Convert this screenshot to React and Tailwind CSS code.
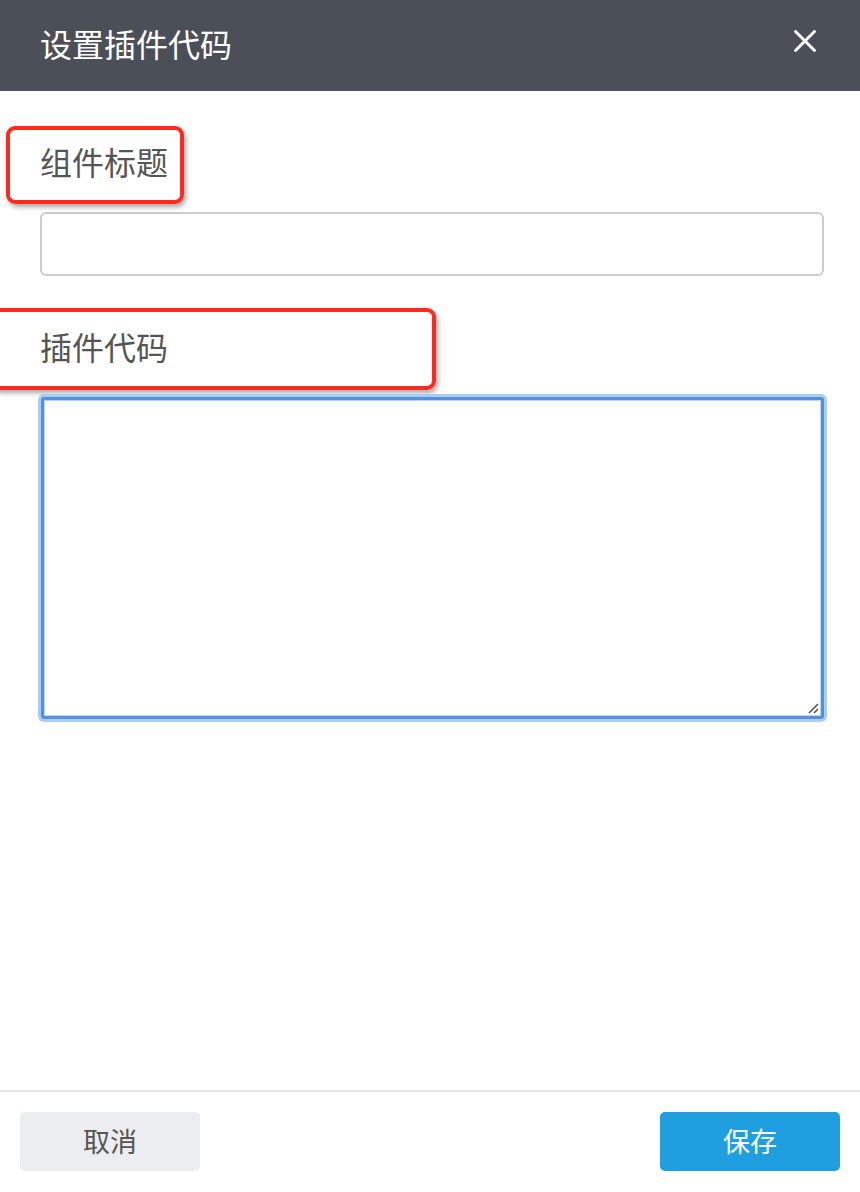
import React from "react";

export default function App() {
  const font = { fontFamily: '"Noto Sans CJK SC", "Noto Sans", sans-serif' };
  return (
    <div className="relative w-[860px] h-[1192px] bg-white flex flex-col overflow-hidden" style={font}>
      {/* Header */}
      <div className="h-[91px] bg-[#4b5058] flex items-center justify-between pl-[40px] pr-[43px] shrink-0">
        <span className="text-white text-[32px] leading-none mt-[-6px]">设置插件代码</span>
        <svg width="24" height="24" viewBox="0 0 24 24" className="mt-[-9px]">
          <path d="M2.5 2.5 L21.5 21.5 M21.5 2.5 L2.5 21.5" stroke="#ffffff" strokeWidth="3" strokeLinecap="round" />
        </svg>
      </div>

      {/* Body */}
      <div className="flex-1 flex flex-col px-[40px] pt-[46px]">
        <div className="relative">
          <div className="text-[32px] leading-[48px] text-[#555555]">组件标题</div>
          <div className="absolute left-[-34px] top-[-11px] w-[178px] h-[78px] border-[4px] border-[#ff2a1e] rounded-[9px] shadow-[2px_3px_5px_rgba(0,0,0,0.35)]"></div>
        </div>
        <div className="mt-[27px] h-[64px] w-[784px] border-2 border-[#cdcdcd] rounded-[6px] bg-white"></div>

        <div className="relative mt-[46px]">
          <div className="text-[32px] leading-[48px] text-[#555555]">插件代码</div>
          <div className="absolute left-[-50px] top-[-14px] w-[446px] h-[82px] border-[4px] border-[#ff2a1e] rounded-[9px] shadow-[2px_3px_5px_rgba(0,0,0,0.35)]"></div>
        </div>
        <div className="relative mt-[27px] ml-[1px] h-[322px] w-[783px] border-[3px] border-[#5590da] rounded-[3px] bg-white shadow-[0_0_0_3px_#aacdf6,inset_0_0_0_1px_#b7d5f5]">
          <svg width="14" height="14" viewBox="0 0 14 14" className="absolute right-[1px] bottom-[1px]">
            <path d="M3 12 L12 3 M8 12 L12 8" stroke="#555555" strokeWidth="1.6" />
          </svg>
        </div>
      </div>

      {/* Footer */}
      <div className="border-t-2 border-[#e6e6e6] px-[20px] pt-[20px] pb-[21px] flex justify-between shrink-0">
        <div className="w-[180px] h-[59px] rounded-[5px] bg-[#ecedf0] flex items-center justify-center text-[27px] text-[#555555]">取消</div>
        <div className="w-[180px] h-[59px] rounded-[5px] bg-[#209fe0] flex items-center justify-center text-[27px] text-white">保存</div>
      </div>
    </div>
  );
}
